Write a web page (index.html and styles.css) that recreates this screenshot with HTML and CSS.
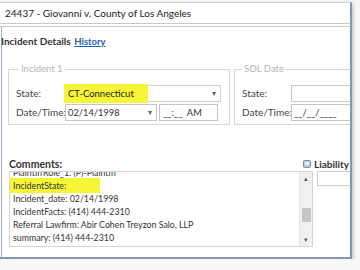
FILE: index.html
```html
<!DOCTYPE html>
<html lang="en">
<head>
    <meta charset="UTF-8">
    <title>24437 - Giovanni v. County of Los Angeles</title>
    <link rel="stylesheet" href="styles.css">
</head>
<body>

    <div class="window">
        <div class="title">24437 - Giovanni v. County of Los Angeles</div>
        <div class="title-rule"></div>

        <div class="content">
            <div class="tabs">
                <span class="tab-current">Incident Details</span>
                <a class="tab-link" href="#">History</a>
            </div>

            <div class="groups">
                <fieldset class="group group-incident">
                    <legend>Incident 1</legend>
                    <div class="row">
                        <span class="label">State:</span>
                        <div class="input select wide">
                            <span class="marker">CT-Connecticut</span>
                            <span class="caret">&#9662;</span>
                        </div>
                    </div>
                    <div class="row">
                        <span class="label">Date/Time:</span>
                        <div class="input select date">
                            <span class="value">02/14/1998</span>
                            <span class="caret">&#9662;</span>
                        </div>
                        <div class="input time">
                            <span class="value">__:__&nbsp;&nbsp;AM</span>
                        </div>
                    </div>
                </fieldset>

                <fieldset class="group group-sol">
                    <legend>SOL Date</legend>
                    <div class="row">
                        <span class="label">State:</span>
                        <div class="input sol-input"></div>
                    </div>
                    <div class="row">
                        <span class="label">Date/Time:</span>
                        <div class="input sol-input"><span class="value">__/__/____</span></div>
                    </div>
                </fieldset>
            </div>

            <div class="lower-head">
                <span class="comments-label">Comments:</span>
                <span class="liability-head">
                    <svg class="collapse-icon" width="8" height="8" viewBox="0 0 8 8">
                        <rect x="0.5" y="0.5" width="7" height="7" rx="1" fill="#b9c6d8" stroke="#7d8ea8"/>
                        <rect x="2" y="2" width="4" height="3" fill="#e8eef6"/>
                    </svg>
                    <span>Liability</span>
                </span>
            </div>

            <div class="lower">
                <div class="comments-box">
                    <div class="comments-view">
                        <div class="comments-text">
                            <div>PlaintiffRole_1: (P)-Plaintiff</div>
                            <div><span class="marker-line">IncidentState:</span></div>
                            <div>Incident_date: 02/14/1998</div>
                            <div>IncidentFacts: (414) 444-2310</div>
                            <div>Referral Lawfirm: Abir Cohen Treyzon Salo, LLP</div>
                            <div>summary: (414) 444-2310</div>
                            <div>CaseType: Sexual Abuse LA County</div>
                        </div>
                    </div>
                    <div class="scrollbar">
                        <span class="arrow">&#9652;</span>
                        <span class="thumb"></span>
                        <span class="arrow">&#9662;</span>
                    </div>
                </div>
                <div class="liability-box"></div>
            </div>
        </div>
    </div>

</body>
</html>
```

FILE: styles.css
```css
body {
    margin: 0;
    padding: 0;
    background-color: #f7f7f7;
    font-family: Lato, "Open Sans", sans-serif;
    color: #333;
    overflow: hidden;
}

.window {
    width: 350px;
    height: 254px;
    margin-top: 2px;
    background-color: #fff;
    border-right: 2px solid #8196b8;
    border-bottom: 2px solid #8196b8;
    border-top: 1px solid #c9d3e2;
    box-shadow: 1px 2px 4px rgba(0, 0, 0, 0.25);
    overflow: hidden;
}

.title {
    height: 20px;
    padding-left: 5px;
    font-size: 10px;
    line-height: 21px;
    color: #222;
    white-space: nowrap;
}

.title-rule {
    height: 2px;
    border-top: 1px solid #c8c8c8;
    border-bottom: 1px solid #c8c8c8;
}

.content {
    height: 230px;
    border-left: 1px solid #9fb0c8;
    margin-left: 1px;
}

.tabs {
    padding-top: 8px;
    margin-left: -1px;
    font-size: 10px;
    line-height: 12px;
    white-space: nowrap;
}

.tab-current {
    font-weight: bold;
    color: #333;
}

.tab-link {
    margin-left: 1px;
    font-weight: bold;
    font-size: 9.5px;
    color: #1f5fb4;
    text-decoration: underline;
}

.groups {
    display: flex;
    gap: 4px;
    margin-top: 16px;
    margin-left: 6px;
}

.group {
    flex-shrink: 0;
    margin: 0;
    padding: 10px 6px 7px 7px;
    border: 1px solid #d8d8d8;
    height: 42px;
}

.group legend {
    padding: 0 2px;
    margin-left: 3px;
    font-size: 9.5px;
    line-height: 10px;
    color: #b4b4b4;
}

.group-incident {
    width: 207px;
}

.group-sol {
    width: 130px;
}

.group-sol legend {
    margin-left: 0;
}

.row {
    display: flex;
    align-items: center;
    gap: 2px;
    height: 18px;
    margin-bottom: 1px;
    font-size: 10px;
    white-space: nowrap;
}

.label {
    width: 47px;
    color: #444;
}

.input {
    box-sizing: border-box;
    flex-shrink: 0;
    height: 17px;
    border: 1px solid #c6c6c6;
    background-color: #fff;
    display: flex;
    align-items: center;
    font-size: 9.3px;
    color: #333;
}

.select {
    justify-content: space-between;
}

.wide {
    width: 156px;
    border-color: #d0d0d0;
}

.date {
    width: 92px;
    padding-left: 2px;
}

.time {
    width: 59px;
    padding-left: 3px;
}

.sol-input {
    width: 70px;
    padding-left: 2px;
}

.caret {
    font-size: 8px;
    color: #666;
    margin-right: 4px;
}

.marker {
    background-color: #f6f637;
    padding: 4px 14px 4px 4px;
    margin-left: -2px;
    font-size: 9.5px;
    color: #222;
}

.lower-head {
    display: flex;
    align-items: center;
    margin-top: 32px;
    margin-left: 7px;
    height: 13px;
    font-size: 10.5px;
    font-weight: bold;
    white-space: nowrap;
}

.liability-head {
    display: flex;
    align-items: center;
    gap: 3px;
    margin-left: auto;
    width: 47px;
    font-size: 10px;
    color: #333;
}

.lower {
    display: flex;
    gap: 4px;
    margin-left: 7px;
    margin-top: 1px;
}

.comments-box {
    box-sizing: border-box;
    flex-shrink: 0;
    width: 304px;
    height: 76px;
    border: 1px solid #d4d4d4;
    display: flex;
}

.comments-view {
    flex: 1;
    overflow: hidden;
}

.comments-text {
    padding-left: 3px;
    margin-top: -6px;
    font-size: 8.8px;
    line-height: 13px;
    color: #333;
    white-space: nowrap;
}

.marker-line {
    background-color: #f6f637;
    padding: 2px 34px 2px 3px;
    margin-left: -3px;
}

.scrollbar {
    width: 12px;
    background-color: #f0f0f0;
    border-left: 1px solid #e6e6e6;
    display: flex;
    flex-direction: column;
    align-items: center;
}

.arrow {
    font-size: 7px;
    line-height: 13px;
    color: #555;
}

.thumb {
    width: 9px;
    height: 14px;
    margin-top: 23px;
    margin-bottom: auto;
    background-color: #c6c6c6;
}

.liability-box {
    box-sizing: border-box;
    flex-shrink: 0;
    width: 40px;
    height: 15px;
    border: 1px solid #cfcfcf;
}
```
